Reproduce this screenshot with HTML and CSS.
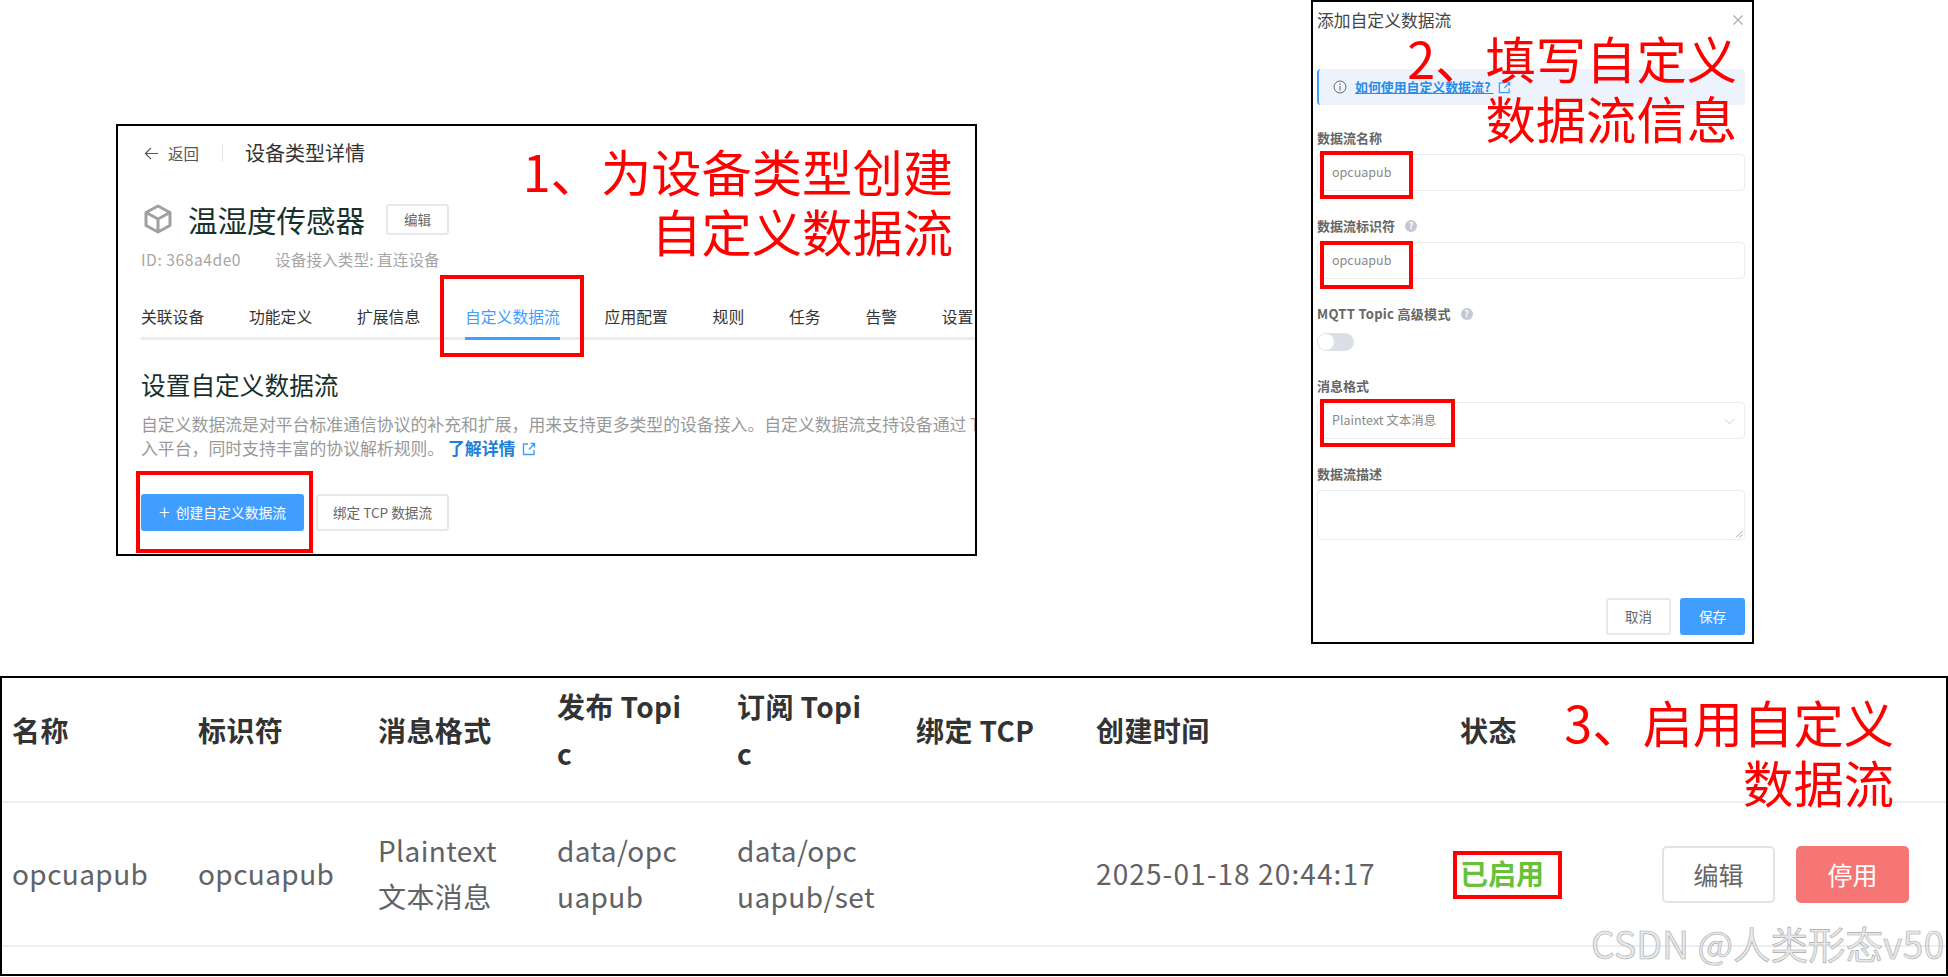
FILE: index.html
```html
<!DOCTYPE html>
<html lang="zh-CN">
<head>
<meta charset="utf-8">
<title>自定义数据流</title>
<link rel="stylesheet" href="styles.css">
</head>
<body>
<main class="canvas">

  <section class="shot shot-device">
    <div class="crumb">
      <svg class="crumb-arrow" viewBox="0 0 16 16"><path d="M15 8H1.500M7.500 2L1.500 8l6 6"/></svg>
      <span class="crumb-back">返回</span>
      <span class="crumb-sep"></span>
      <span class="crumb-title">设备类型详情</span>
    </div>
    <div class="device-head">
      <svg class="cube" viewBox="0 0 28 30"><path d="M14 2L26 8.500V21.500L14 28L2 21.500V8.500ZM2 8.500L14 15L26 8.500M14 15V28"/></svg>
      <h1 class="device-name">温湿度传感器</h1>
      <button class="btn btn-small">编辑</button>
    </div>
    <div class="device-meta"><span class="device-id">ID: 368a4de0</span><span>设备接入类型: 直连设备</span></div>
    <nav class="tabs">
      <span class="tab">关联设备</span>
      <span class="tab">功能定义</span>
      <span class="tab">扩展信息</span>
      <span class="tab tab-active">自定义数据流</span>
      <span class="tab">应用配置</span>
      <span class="tab">规则</span>
      <span class="tab">任务</span>
      <span class="tab">告警</span>
      <span class="tab">设置</span>
    </nav>
    <h2 class="section-title">设置自定义数据流</h2>
    <p class="section-desc">自定义数据流是对平台标准通信协议的补充和扩展，用来支持更多类型的设备接入。自定义数据流支持设备通过 TCP 接<br>入平台，同时支持丰富的协议解析规则。 <a class="more">了解详情<svg class="ext ext-more" viewBox="0 0 14 14"><path d="M6 2H1.500V12.500H12V8M7 7.500L12.500 1.500M8.500 1.500H12.500V5.500"/></svg></a></p>
    <div class="actions">
      <button class="btn btn-primary btn-create"><span class="plus">+</span>创建自定义数据流</button>
      <button class="btn btn-bind">绑定 TCP 数据流</button>
    </div>
  </section>

  <section class="shot shot-dialog">
    <div class="dialog-head">
      <span class="dialog-title">添加自定义数据流</span>
      <svg class="close" viewBox="0 0 10 10"><path d="M.5 .5L9.500 9.500M9.500 .5L.5 9.500"/></svg>
    </div>
    <div class="alert">
      <svg class="info" viewBox="0 0 14 14"><circle cx="7" cy="7" r="6"/><path d="M7 6V10.500M7 3.500V5"/></svg>
      <a class="alert-link">如何使用自定义数据流?&nbsp;</a>
      <svg class="ext ext-alert" viewBox="0 0 14 14"><path d="M6 2H1.500V12.500H12V8M7 7.500L12.500 1.500M8.500 1.500H12.500V5.500"/></svg>
    </div>
    <div class="field">
      <div class="label">数据流名称</div>
      <div class="control">opcuapub</div>
    </div>
    <div class="field">
      <div class="label">数据流标识符<span class="hint">?</span></div>
      <div class="control">opcuapub</div>
    </div>
    <div class="field">
      <div class="label label-switch">MQTT Topic 高级模式<span class="hint">?</span></div>
      <div class="switch"><span class="knob"></span></div>
    </div>
    <div class="field">
      <div class="label">消息格式</div>
      <div class="control control-select">Plaintext 文本消息
        <svg class="chevron" viewBox="0 0 12 7"><path d="M1 1L6 6L11 1"/></svg>
      </div>
    </div>
    <div class="field">
      <div class="label">数据流描述</div>
      <div class="control control-area">
        <svg class="grip" viewBox="0 0 8 8"><path d="M1 7.500L7.500 1M4.500 7.500L7.500 4.500"/></svg>
      </div>
    </div>
    <div class="dialog-foot">
      <button class="btn btn-foot">取消</button>
      <button class="btn btn-primary btn-foot">保存</button>
    </div>
  </section>

  <section class="shot shot-table">
    <div class="row row-head">
      <div>名称</div>
      <div>标识符</div>
      <div>消息格式</div>
      <div>发布 Topi<br>c</div>
      <div>订阅 Topi<br>c</div>
      <div>绑定 TCP</div>
      <div>创建时间</div>
      <div>状态</div>
      <div></div>
    </div>
    <div class="row row-body">
      <div>opcuapub</div>
      <div>opcuapub</div>
      <div>Plaintext<br>文本消息</div>
      <div>data/opc<br>uapub</div>
      <div>data/opc<br>uapub/set</div>
      <div></div>
      <div class="cell-date">2025-01-18 20:44:17</div>
      <div class="status-on">已启用</div>
      <div class="row-actions">
        <button class="btn btn-row">编辑</button>
        <button class="btn btn-row btn-danger">停用</button>
      </div>
    </div>
  </section>

  <div class="mark mark-tab"></div>
  <div class="mark mark-create"></div>
  <div class="mark mark-name"></div>
  <div class="mark mark-id"></div>
  <div class="mark mark-format"></div>
  <div class="mark mark-status"></div>

  <div class="note note-one">1、为设备类型创建<br>自定义数据流</div>
  <div class="note note-two">2、填写自定义<br>数据流信息</div>
  <div class="note note-three">3、启用自定义<br>数据流</div>
  <div class="watermark">CSDN @人类形态v50</div>
</main>
</body>
</html>
```

FILE: styles.css
```css
* { box-sizing: border-box; }

html, body { margin: 0; background: #fff; }

body {
  font-family: "Noto Sans CJK SC", "Noto Sans", sans-serif;
  color: #606266;
}

.canvas {
  position: relative;
  width: 1948px;
  height: 977px;
  overflow: hidden;
  background: #fff;
}

.shot {
  position: absolute;
  border: 2px solid #000;
  overflow: hidden;
  background: #fff;
}

.btn {
  font-family: inherit;
  background: #fff;
  border: 2px solid #e6e8ee;
  border-radius: 3px;
  color: #666;
  padding: 0;
  display: inline-flex;
  align-items: center;
  justify-content: center;
}

.btn-primary {
  background: #409eff;
  border-color: #409eff;
  color: #fff;
}

/* Panel 1 */
.shot-device {
  left: 116px;
  top: 124px;
  width: 861px;
  height: 432px;
  padding: 15px 0 0 23px;
}

.crumb {
  display: flex;
  align-items: center;
  height: 24px;
  color: #555;
}

.crumb-arrow {
  width: 15px;
  height: 15px;
  margin-left: 3px;
  fill: none;
  stroke: #555;
  stroke-width: 1.3;
}

.crumb-back { font-size: 15.5px; margin-left: 9px; line-height: 24px; }

.crumb-sep {
  width: 1px;
  height: 18px;
  background: #dfe3ea;
  margin: 0 22px 0 23px;
}

.crumb-title { font-size: 20px; color: #333; line-height: 24px; }

.device-head {
  display: flex;
  align-items: center;
  height: 30px;
  margin-top: 39px;
}

.cube {
  width: 28px;
  height: 30px;
  margin-left: 3px;
  fill: none;
  stroke: #a0a0a0;
  stroke-width: 3;
  stroke-linejoin: round;
}

.device-name {
  margin: 0 0 0 16px;
  font-size: 29.500px;
  line-height: 30px;
  font-weight: 400;
  color: #17302c;
}

.btn-small {
  width: 63px;
  height: 31px;
  margin-left: 21px;
  font-size: 13.500px;
}

.device-meta {
  display: flex;
  gap: 34px;
  margin-top: 15px;
  font-size: 15.700px;
  line-height: 22px;
  color: #a6a6a6;
}

.device-id { letter-spacing: .5px; }

.tabs {
  display: flex;
  gap: 44.800px;
  margin-top: 34px;
  padding-bottom: 8px;
  border-bottom: 3px solid #e8ebf0;
  font-size: 15.800px;
  line-height: 24px;
  color: #333;
}

.tab { position: relative; white-space: nowrap; }

.tab-active { color: #409eff; }

.tab-active::after {
  content: "";
  position: absolute;
  left: 0;
  right: 0;
  bottom: -11px;
  height: 3px;
  background: #409eff;
}

.section-title {
  margin: 27px 0 0;
  font-size: 24.700px;
  line-height: 34px;
  font-weight: 400;
  color: #17302c;
}

.section-desc {
  margin: 11px 0 0;
  font-size: 16.850px;
  line-height: 24px;
  color: #999;
  white-space: nowrap;
}

.more {
  color: #1f7fd8;
  font-weight: 700;
}

.ext {
  fill: none;
  stroke: #409eff;
  stroke-width: 1.4;
}

.ext-more {
  width: 14px;
  height: 14px;
  margin-left: 7px;
  vertical-align: -1px;
}

.actions {
  display: flex;
  gap: 12px;
  margin-top: 34px;
}

.btn-create {
  width: 163px;
  height: 37px;
  font-size: 13.800px;
  padding-bottom: 2px;
}

.plus { font-size: 20px; line-height: 20px; margin-right: 6px; font-weight: 300; }

.btn-bind {
  width: 133px;
  height: 37px;
  font-size: 13.600px;
  padding-bottom: 2px;
}

/* Panel 2 */
.shot-dialog {
  left: 1311px;
  top: 0;
  width: 443px;
  height: 644px;
  padding: 6px 7px 0 4px;
}

.dialog-head {
  display: flex;
  align-items: center;
  justify-content: space-between;
  height: 24px;
  padding-right: 2px;
}

.dialog-title { font-size: 16.800px; line-height: 24px; color: #444; }

.close {
  width: 10px;
  height: 10px;
  fill: none;
  stroke: #a8acb3;
  stroke-width: 1.2;
}

.alert {
  display: flex;
  align-items: center;
  height: 36px;
  margin-top: 37px;
  padding-left: 14px;
  background: #ecf3fd;
  border-left: 2px solid #409eff;
  border-radius: 4px;
}

.info {
  width: 14px;
  height: 14px;
  fill: none;
  stroke: #666;
  stroke-width: 1;
}

.alert-link {
  margin-left: 8px;
  font-size: 12.900px;
  font-weight: 700;
  line-height: 20px;
  color: #2a8be8;
  text-decoration: underline;
}

.ext-alert { width: 13px; height: 13px; margin-left: 5px; }

.field { margin-top: 26px; }

.alert + .field { margin-top: 24px; }

.label {
  display: flex;
  align-items: center;
  height: 20px;
  margin-bottom: 5px;
  font-size: 13px;
  font-weight: 700;
  line-height: 18px;
  padding-bottom: 2px;
  color: #666;
}

.label-switch { margin-bottom: 7.500px; letter-spacing: .3px; }

.hint {
  width: 12px;
  height: 12px;
  margin-left: 10px;
  border-radius: 50%;
  background: #c4c8d0;
  color: #fff;
  font-size: 9px;
  line-height: 12px;
  text-align: center;
}

.control {
  position: relative;
  height: 37px;
  padding-left: 14px;
  border: 1px solid #e9ebf0;
  border-radius: 4px;
  font-size: 12.500px;
  line-height: 34px;
  color: #8a8a8a;
}

.control-area { height: 50px; }

.chevron {
  position: absolute;
  right: 9px;
  top: 15px;
  width: 11px;
  height: 7px;
  fill: none;
  stroke: #c4c8d0;
  stroke-width: 1;
}

.grip {
  position: absolute;
  right: 1px;
  bottom: 1px;
  width: 8px;
  height: 8px;
  fill: none;
  stroke: #888;
  stroke-width: .8;
}

.switch {
  width: 37px;
  height: 18px;
  padding: 1px;
  border-radius: 9px;
  background: #dcdfe6;
}

.knob {
  display: block;
  width: 16px;
  height: 16px;
  border-radius: 50%;
  background: #fff;
}

.dialog-foot {
  display: flex;
  justify-content: flex-end;
  gap: 9px;
  margin-top: 58px;
}

.btn-foot {
  width: 65px;
  height: 37px;
  font-size: 13.500px;
  padding-bottom: 1px;
}

/* Panel 3 */
.shot-table {
  left: 0;
  top: 676px;
  width: 1948px;
  height: 300px;
  padding-left: 0;
}

.row {
  display: grid;
  grid-template-columns: 186px 180px 179px 180px 179px 180px 364px 202px 1fr;
  padding-left: 10px;
  align-items: center;
  border-bottom: 2px solid #ebeef5;
}

.row-head {
  height: 125px;
  padding-bottom: 19px;
  font-size: 28px;
  font-weight: 700;
  line-height: 47px;
  letter-spacing: .4px;
  color: #333;
}

.row-body {
  height: 144px;
  padding-bottom: 2px;
  font-size: 28px;
  line-height: 46px;
  letter-spacing: .4px;
  color: #606266;
}

.cell-date { letter-spacing: 1.100px; }

.status-on { color: #67c23a; font-weight: 700; letter-spacing: 0; }

.row-actions { display: flex; gap: 21px; margin-top: 2px; }

.btn-row {
  width: 113px;
  height: 57px;
  font-size: 25px;
  border-radius: 5px;
  border-color: #dfe3ea;
  padding-bottom: 1px;
}

.btn-danger {
  background: #f67676;
  border-color: #f67676;
  color: #fff;
}

/* Red annotation boxes */
.mark {
  position: absolute;
  border: 4px solid #f00;
}

.mark-tab { left: 440px; top: 275px; width: 144px; height: 82px; }
.mark-create { left: 136px; top: 471px; width: 177px; height: 82px; }
.mark-name { left: 1320px; top: 151px; width: 93px; height: 48px; }
.mark-id { left: 1320px; top: 241px; width: 93px; height: 48px; }
.mark-format { left: 1320px; top: 399px; width: 135px; height: 48px; }
.mark-status { left: 1453px; top: 851px; width: 109px; height: 48px; }

.note {
  position: absolute;
  font-size: 50.300px;
  line-height: 60px;
  color: #f00;
  text-align: right;
  white-space: nowrap;
}

.note-one { right: 995px; top: 140px; }
.note-two { right: 211px; top: 27px; }
.note-three { right: 54px; top: 691px; }

.watermark {
  position: absolute;
  left: 1591px;
  top: 916px;
  font-size: 37.500px;
  line-height: 54px;
  white-space: nowrap;
  color: rgba(225, 225, 225, .75);
  -webkit-text-stroke: .6px #aaa;
}
```
